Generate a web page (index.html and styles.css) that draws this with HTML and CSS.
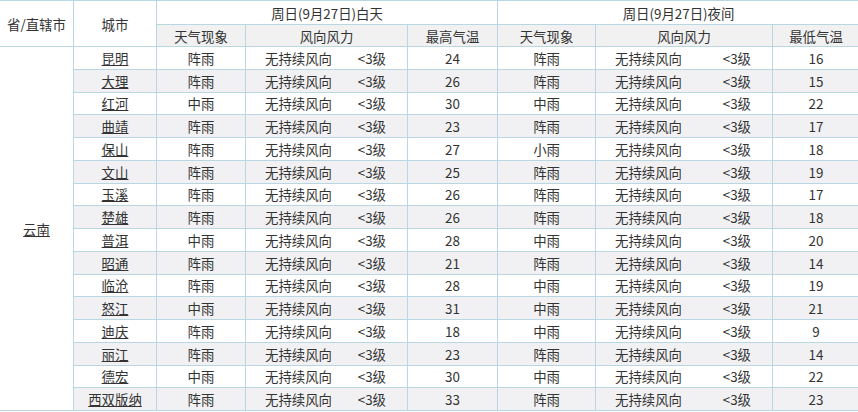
FILE: index.html
```html
<!DOCTYPE html>
<html lang="zh-CN">
<head>
<meta charset="utf-8">
<title>云南天气预报</title>
<link rel="stylesheet" href="styles.css">
</head>
<body>
<table class="weather">
  <colgroup>
    <col class="c-prov">
    <col class="c-city">
    <col class="c-wx-d">
    <col class="c-wind-d">
    <col class="c-temp-d">
    <col class="c-wx-n">
    <col class="c-wind-n">
    <col class="c-temp-n">
  </colgroup>
  <thead>
    <tr class="h1">
      <th rowspan="2">省/直辖市</th>
      <th rowspan="2">城市</th>
      <th colspan="3">周日(9月27日)白天</th>
      <th colspan="3">周日(9月27日)夜间</th>
    </tr>
    <tr class="h2">
      <th>天气现象</th>
      <th>风向风力</th>
      <th>最高气温</th>
      <th>天气现象</th>
      <th>风向风力</th>
      <th>最低气温</th>
    </tr>
  </thead>
  <tbody>
    <tr><td rowspan="16" class="prov"><a href="#">云南</a></td><td><a href="#">昆明</a></td><td>阵雨</td><td><div class="wind"><span>无持续风向</span><span>&lt;3级</span></div></td><td>24</td><td>阵雨</td><td><div class="wind"><span>无持续风向</span><span>&lt;3级</span></div></td><td>16</td></tr>
    <tr class="alt"><td><a href="#">大理</a></td><td>阵雨</td><td><div class="wind"><span>无持续风向</span><span>&lt;3级</span></div></td><td>26</td><td>阵雨</td><td><div class="wind"><span>无持续风向</span><span>&lt;3级</span></div></td><td>15</td></tr>
    <tr><td><a href="#">红河</a></td><td>中雨</td><td><div class="wind"><span>无持续风向</span><span>&lt;3级</span></div></td><td>30</td><td>中雨</td><td><div class="wind"><span>无持续风向</span><span>&lt;3级</span></div></td><td>22</td></tr>
    <tr class="alt"><td><a href="#">曲靖</a></td><td>阵雨</td><td><div class="wind"><span>无持续风向</span><span>&lt;3级</span></div></td><td>23</td><td>阵雨</td><td><div class="wind"><span>无持续风向</span><span>&lt;3级</span></div></td><td>17</td></tr>
    <tr><td><a href="#">保山</a></td><td>阵雨</td><td><div class="wind"><span>无持续风向</span><span>&lt;3级</span></div></td><td>27</td><td>小雨</td><td><div class="wind"><span>无持续风向</span><span>&lt;3级</span></div></td><td>18</td></tr>
    <tr class="alt"><td><a href="#">文山</a></td><td>阵雨</td><td><div class="wind"><span>无持续风向</span><span>&lt;3级</span></div></td><td>25</td><td>阵雨</td><td><div class="wind"><span>无持续风向</span><span>&lt;3级</span></div></td><td>19</td></tr>
    <tr><td><a href="#">玉溪</a></td><td>阵雨</td><td><div class="wind"><span>无持续风向</span><span>&lt;3级</span></div></td><td>26</td><td>阵雨</td><td><div class="wind"><span>无持续风向</span><span>&lt;3级</span></div></td><td>17</td></tr>
    <tr class="alt"><td><a href="#">楚雄</a></td><td>阵雨</td><td><div class="wind"><span>无持续风向</span><span>&lt;3级</span></div></td><td>26</td><td>阵雨</td><td><div class="wind"><span>无持续风向</span><span>&lt;3级</span></div></td><td>18</td></tr>
    <tr><td><a href="#">普洱</a></td><td>中雨</td><td><div class="wind"><span>无持续风向</span><span>&lt;3级</span></div></td><td>28</td><td>中雨</td><td><div class="wind"><span>无持续风向</span><span>&lt;3级</span></div></td><td>20</td></tr>
    <tr class="alt"><td><a href="#">昭通</a></td><td>阵雨</td><td><div class="wind"><span>无持续风向</span><span>&lt;3级</span></div></td><td>21</td><td>阵雨</td><td><div class="wind"><span>无持续风向</span><span>&lt;3级</span></div></td><td>14</td></tr>
    <tr><td><a href="#">临沧</a></td><td>阵雨</td><td><div class="wind"><span>无持续风向</span><span>&lt;3级</span></div></td><td>28</td><td>中雨</td><td><div class="wind"><span>无持续风向</span><span>&lt;3级</span></div></td><td>19</td></tr>
    <tr class="alt"><td><a href="#">怒江</a></td><td>中雨</td><td><div class="wind"><span>无持续风向</span><span>&lt;3级</span></div></td><td>31</td><td>中雨</td><td><div class="wind"><span>无持续风向</span><span>&lt;3级</span></div></td><td>21</td></tr>
    <tr><td><a href="#">迪庆</a></td><td>阵雨</td><td><div class="wind"><span>无持续风向</span><span>&lt;3级</span></div></td><td>18</td><td>中雨</td><td><div class="wind"><span>无持续风向</span><span>&lt;3级</span></div></td><td>9</td></tr>
    <tr class="alt"><td><a href="#">丽江</a></td><td>阵雨</td><td><div class="wind"><span>无持续风向</span><span>&lt;3级</span></div></td><td>23</td><td>阵雨</td><td><div class="wind"><span>无持续风向</span><span>&lt;3级</span></div></td><td>14</td></tr>
    <tr><td><a href="#">德宏</a></td><td>中雨</td><td><div class="wind"><span>无持续风向</span><span>&lt;3级</span></div></td><td>30</td><td>中雨</td><td><div class="wind"><span>无持续风向</span><span>&lt;3级</span></div></td><td>22</td></tr>
    <tr class="alt"><td><a href="#">西双版纳</a></td><td>阵雨</td><td><div class="wind"><span>无持续风向</span><span>&lt;3级</span></div></td><td>33</td><td>阵雨</td><td><div class="wind"><span>无持续风向</span><span>&lt;3级</span></div></td><td>23</td></tr>
  </tbody>
</table>
</body>
</html>
```
FILE: styles.css
```css
html, body {
  margin: 0;
  padding: 0;
  background: #ffffff;
  overflow: hidden;
}

body {
  font-family: "Noto Sans CJK SC", "Noto Sans", sans-serif;
  font-size: 13.4px;
  color: #333333;
}

.weather {
  border-collapse: collapse;
  table-layout: fixed;
  width: 860px;
  margin-left: -1px;
}

.c-prov { width: 74px; }
.c-city { width: 83px; }
.c-wx-d { width: 89px; }
.c-wind-d { width: 162px; }
.c-temp-d { width: 90px; }
.c-wx-n { width: 98px; }
.c-wind-n { width: 177px; }
.c-temp-n { width: 87px; }

.weather th,
.weather td {
  border: 1px solid #b9d6e3;
  padding: 0;
  text-align: center;
  vertical-align: middle;
  font-weight: normal;
  line-height: 16px;
  white-space: nowrap;
}

.weather .h1 { height: 24px; }
.weather .h2 { height: 22px; }
.weather .h2 th { background: #f1f1f1; }

.weather tbody tr { height: 22.75px; }
.weather tbody tr.alt td { background: #f1f1f3; }
.weather tbody tr.alt td.prov { background: #ffffff; }

.weather a {
  color: #333333;
  text-decoration: underline;
}

.wind {
  display: flex;
  justify-content: space-between;
  padding: 0 21px 0 19px;
}
```
